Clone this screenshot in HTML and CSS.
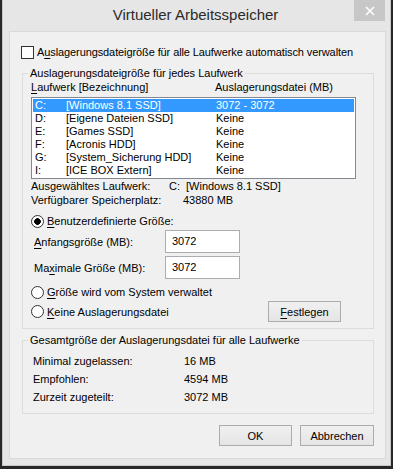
FILE: index.html
```html
<!DOCTYPE html>
<html lang="de">
<head>
<meta charset="utf-8">
<title>Virtueller Arbeitsspeicher</title>
<link rel="stylesheet" href="styles.css">
</head>
<body>
<div class="window">
  <div class="titlebar">
    <div class="title">Virtueller Arbeitsspeicher</div>
    <div class="close"><svg width="10" height="10" viewBox="0 0 10 10"><path d="M1 1 L9 9 M9 1 L1 9" stroke="#fff" stroke-width="1.6"/></svg></div>
  </div>
  <div class="client">
    <div class="autorow"><span class="check"></span><span>A<u>u</u>slagerungsdateigröße für alle Laufwerke automatisch verwalten</span></div>

    <div class="group g1">
      <div class="legend">Auslagerungsdateigröße für jedes Laufwerk</div>
      <div class="listhead"><span class="c1"><u>L</u>aufwerk [Bezeichnung]</span><span>Auslagerungsdatei (MB)</span></div>
      <div class="listbox">
        <div class="row sel"><span class="drv">C:</span><span class="lbl">[Windows 8.1 SSD]</span><span>3072 - 3072</span></div>
        <div class="row"><span class="drv">D:</span><span class="lbl">[Eigene Dateien SSD]</span><span>Keine</span></div>
        <div class="row"><span class="drv">E:</span><span class="lbl">[Games SSD]</span><span>Keine</span></div>
        <div class="row"><span class="drv">F:</span><span class="lbl">[Acronis HDD]</span><span>Keine</span></div>
        <div class="row"><span class="drv">G:</span><span class="lbl">[System_Sicherung HDD]</span><span>Keine</span></div>
        <div class="row"><span class="drv">I:</span><span class="lbl">[ICE BOX Extern]</span><span>Keine</span></div>
      </div>
      <div class="info"><span class="ilbl">Ausgewähltes Laufwerk:</span><span class="ic">C:</span><span>[Windows 8.1 SSD]</span></div>
      <div class="info"><span class="ilbl">Verfügbarer Speicherplatz:</span><span class="iv">43880 MB</span></div>
      <div class="radiorow first"><span class="radio on"></span><span><u>B</u>enutzerdefinierte Größe:</span></div>
      <div class="fieldrow"><span class="flbl"><u>A</u>nfangsgröße (MB):</span><span class="input">3072</span></div>
      <div class="fieldrow second"><span class="flbl">Ma<u>x</u>imale Größe (MB):</span><span class="input">3072</span></div>
      <div class="radiorow sys"><span class="radio"></span><span><u>G</u>röße wird vom System verwaltet</span></div>
      <div class="lastrow">
        <div class="radiorow none"><span class="radio"></span><span><u>K</u>eine Auslagerungsdatei</span></div>
        <div class="btn set"><u>F</u>estlegen</div>
      </div>
    </div>

    <div class="group g2">
      <div class="legend">Gesamtgröße der Auslagerungsdatei für alle Laufwerke</div>
      <div class="total first"><span class="tl">Minimal zugelassen:</span><span>16 MB</span></div>
      <div class="total"><span class="tl">Empfohlen:</span><span>4594 MB</span></div>
      <div class="total"><span class="tl">Zurzeit zugeteilt:</span><span>3072 MB</span></div>
    </div>

    <div class="buttons">
      <div class="btn ok">OK</div>
      <div class="btn cancel">Abbrechen</div>
    </div>
  </div>
</div>
</body>
</html>
```

FILE: styles.css
```css
html, body {
  margin: 0;
  padding: 0;
}
body {
  width: 393px;
  height: 469px;
  overflow: hidden;
  background: #282828;
  font-family: "Liberation Sans", Arial, sans-serif;
  font-size: 11px;
  color: #000;
  white-space: nowrap;
}
u { text-decoration: underline; text-underline-offset: 2px; }

.window {
  margin-left: 2px;
  width: 389px;
  height: 466px;
  background: #e6e6e6;
  box-sizing: border-box;
  border-left: 1px solid #c8c8c8;
  border-right: 1px solid #c8c8c8;
  border-bottom: 1px solid #c8c8c8;
  display: flex;
  flex-direction: column;
}
.titlebar {
  height: 31px;
  position: relative;
  flex: none;
}
.title {
  text-align: center;
  font-size: 15px;
  line-height: 30px;
  color: #2b2b2b;
  padding-right: 2px;
}
.close {
  position: absolute;
  top: 0;
  right: 5px;
  width: 31px;
  height: 21px;
  background: #c7c7c7;
  display: flex;
  align-items: center;
  justify-content: center;
}
.client {
  margin-left: 6px;
  width: 377px;
  box-sizing: border-box;
  border: 1px solid #d9d9d9;
  background: #f0f0f0;
  padding-bottom: 12px;
}

.autorow {
  display: flex;
  align-items: center;
  gap: 3px;
  height: 14px;
  margin: 13px 0 0 11px;
  line-height: 14px;
}
.autorow span:last-child { letter-spacing: -0.1px; }
.check {
  width: 13px;
  height: 13px;
  box-sizing: border-box;
  border: 1px solid #333;
  background: #fff;
  flex: none;
}

.group {
  margin-left: 12px;
  width: 352px;
  box-sizing: border-box;
  border: 1px solid #dcdcdc;
}
.g1 { margin-top: 14px; padding-bottom: 6px; }
.g2 { margin-top: 11px; padding-bottom: 7px; }
.legend {
  margin: -8px 0 0 5px;
  padding: 0 2px;
  width: fit-content;
  background: #f0f0f0;
  line-height: 14px;
}

.listhead {
  display: flex;
  line-height: 14px;
  padding-left: 8px;
}
.listhead .c1 { width: 184px; }

.listbox {
  margin: 3px 0 0 8px;
  width: 325px;
  height: 82px;
  box-sizing: border-box;
  border: 1px solid #828790;
  background: #fff;
  padding: 1px;
}
.row {
  display: flex;
  height: 13px;
  line-height: 13px;
  padding-left: 2px;
}
.row.sel { background: #3399ff; color: #fff; }
.row .drv { width: 31px; }
.row .lbl { width: 150px; }

.info {
  display: flex;
  line-height: 14px;
  padding-left: 8px;
}
.info .ilbl { width: 138px; }
.info .ic { width: 17px; }
.info .iv { padding-left: 14px; }

.radiorow {
  display: flex;
  align-items: center;
  gap: 3px;
  line-height: 14px;
  padding-left: 8px;
}
.radiorow.first { margin-top: 7px; }
.radiorow.sys { margin-top: 6px; }
.radio {
  width: 13px;
  height: 13px;
  box-sizing: border-box;
  border-radius: 50%;
  border: 1px solid #333;
  background: #fff;
  flex: none;
}
.radio.on {
  background: radial-gradient(circle, #000 0 3px, #fff 3.6px);
}

.fieldrow {
  display: flex;
  align-items: center;
  margin-top: 2px;
  padding-left: 11px;
  height: 23px;
}
.fieldrow.second { margin-top: 3px; }
.flbl { width: 131px; }
.input {
  width: 75px;
  height: 23px;
  box-sizing: border-box;
  border: 1px solid #abadb3;
  background: #fff;
  padding-left: 6px;
  line-height: 20px;
}

.lastrow {
  display: flex;
  align-items: center;
  justify-content: space-between;
  margin-top: 2px;
  padding-right: 32px;
  height: 21px;
}
.radiorow.none { padding-left: 8px; }

.btn {
  height: 21px;
  box-sizing: border-box;
  border: 1px solid #acacac;
  background: linear-gradient(#f0f0f0, #e5e5e5);
  display: flex;
  align-items: center;
  justify-content: center;
}
.btn.set { width: 73px; }
.btn.ok { width: 73px; }
.btn.cancel { width: 74px; }

.total {
  display: flex;
  height: 18px;
  line-height: 18px;
  padding-left: 10px;
}
.total.first { margin-top: 5px; }
.total .tl { width: 151px; }

.buttons {
  display: flex;
  justify-content: flex-end;
  gap: 8px;
  margin-top: 11px;
  padding-right: 11px;
}
```
